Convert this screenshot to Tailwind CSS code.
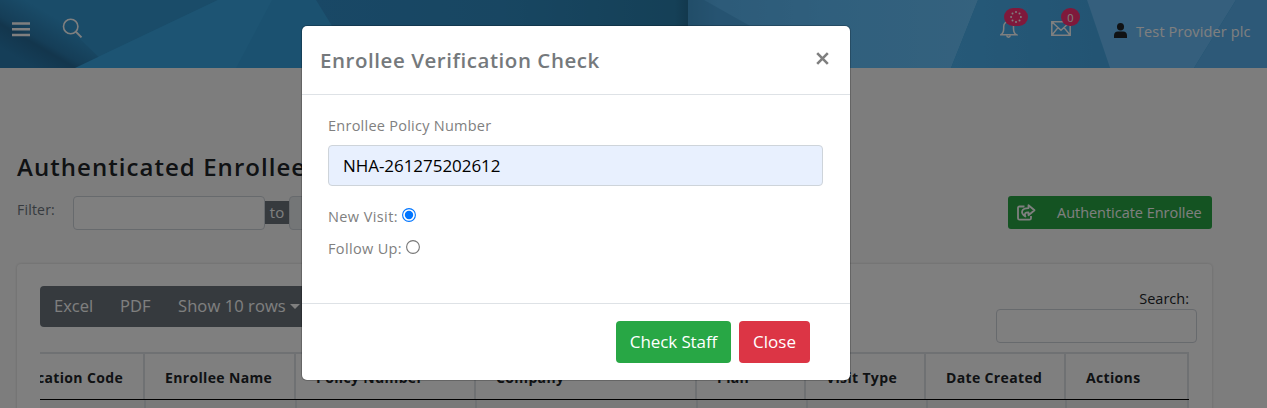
<!DOCTYPE html>
<html lang="en">
<head>
<meta charset="utf-8">
<title>Authenticated Enrollees</title>
<script src="https://cdn.jsdelivr.net/npm/@tailwindcss/browser@4"></script>
</head>
<body class="h-[408px] w-[1267px] overflow-hidden bg-[#fbfbfb] font-['Open_Sans','Noto_Sans',sans-serif] text-[#212529]">
<div class="relative h-[408px] w-[1267px] overflow-hidden">
  <header class="relative h-[68px] w-full overflow-hidden bg-[#36a4e0]">
    <svg class="absolute inset-0" width="1267" height="68" viewBox="0 0 1267 68">
      <defs>
        <linearGradient id="g2" x1="0" x2="1"><stop offset="0" stop-color="#3290cc"/><stop offset="0.5" stop-color="#308dc4"/><stop offset="0.96" stop-color="#2a80ae"/><stop offset="1" stop-color="#256f98"/></linearGradient>
        <linearGradient id="g3" x1="0" x2="1"><stop offset="0" stop-color="#4ea6dc"/><stop offset="0.1" stop-color="#5ab6f2"/><stop offset="0.5" stop-color="#60bffb"/><stop offset="1" stop-color="#6ac4fc"/></linearGradient>
        <linearGradient id="g4" x1="22" y1="60" x2="49" y2="14" gradientUnits="userSpaceOnUse"><stop offset="0" stop-color="#2a7cb0"/><stop offset="0.38" stop-color="#266c9a"/><stop offset="0.5" stop-color="#2b7caf"/><stop offset="1" stop-color="#3498d2"/></linearGradient>
        <linearGradient id="g5" x1="0" x2="1"><stop offset="0" stop-color="#4cb2f0"/><stop offset="1" stop-color="#46a8e6"/></linearGradient>
      </defs>
      <rect width="320" height="68" fill="#36a2e0"/>
      <path d="M0 0H218L75 68H0Z" fill="#3498d2"/>
      <path d="M0 0H40L110 68H0Z" fill="url(#g4)"/>
      <path d="M218 0H272L236 68H75Z" fill="#3aa9e6"/>
      <path d="M316 0H690V68H358Z" fill="url(#g2)"/>
      <path d="M688 0H978L951 68H688Z" fill="url(#g3)"/>
      <path d="M688 0H704L800 54V68H688Z" fill="#2f86bd" fill-opacity=".3"/>
      <path d="M978 0H1087L1110 68H951Z" fill="url(#g5)"/>
      <path d="M1087 0H1236L1194 68H1110Z" fill="#6abefa"/>
      <path d="M1236 0H1267V68H1194Z" fill="#5ab3f0"/>
    </svg>
    <div class="relative flex h-full items-start text-white">
      <svg class="ml-3 mt-[22px]" width="18" height="15" viewBox="0 0 18 15"><path d="M0 1.5H18M0 7.3H18M0 13H18" stroke="white" stroke-width="2.4"/></svg>
      <svg class="ml-[32px] mt-[18px]" width="21" height="21" viewBox="0 0 21 21" fill="none" stroke="white" stroke-width="1.6"><circle cx="8.7" cy="8.5" r="7.2"/><path d="M13.8 13.6L19.5 19.4" stroke-width="2"/></svg>
      <div class="relative ml-[917px] mt-[20px]">
        <svg width="18" height="19" viewBox="0 0 18 19" fill="none" stroke="white" stroke-width="1.5"><path d="M.9 14.7C3 13.4 3.7 11.5 3.7 8.5V6.5C3.7 3.6 5.7 1.8 8.5 1.8S13.5 3.6 13.5 6.5V8.5C13.5 11.5 14.2 13.4 16.3 14.7Z"/><path d="M6.7 15.4C7 17.8 10 17.8 10.3 15.4"/></svg>
        <span class="absolute -top-3 left-1 flex h-[18px] w-6 items-center justify-center rounded-full bg-[#ff3377]">
          <svg width="12" height="12" viewBox="0 0 12 12" fill="white"><circle cx="6" cy="1.1" r="1"/><circle cx="9.5" cy="2.5" r="1"/><circle cx="10.9" cy="6" r="1"/><circle cx="9.5" cy="9.5" r="1"/><circle cx="6" cy="10.9" r="1"/><circle cx="2.5" cy="9.5" r="1"/><circle cx="1.1" cy="6" r="1"/><circle cx="2.5" cy="2.5" r="1"/></svg>
        </span>
      </div>
      <div class="relative ml-[33px] mt-[21px]">
        <svg width="20" height="15" viewBox="0 0 20 15" fill="none" stroke="white" stroke-width="1.5"><path d="M.8 .8H19.2V14.2H.8ZM1 1L10 9.3L19 1M1 14L7 6.6M19 14L13 6.6"/></svg>
        <span class="absolute -top-[13px] left-[10px] flex h-[18px] w-[19px] items-center justify-center rounded-full bg-[#ff3377] text-[11px] leading-none">0</span>
      </div>
      <svg class="ml-[43px] mt-[23px]" width="13" height="15" viewBox="0 0 14 15" preserveAspectRatio="none" fill="#212529"><circle cx="7" cy="3.8" r="3.8"/><path d="M0 15V12.6C0 10 1.8 8.5 4 8.5H10C12.2 8.5 14 10 14 12.6V15Z"/></svg>
      <span class="ml-[9px] mt-[21px] whitespace-nowrap text-[14.5px] leading-[22px] tracking-[0.12px]">Test Provider plc</span>
    </div>
  </header>

  <main class="mr-4 flex h-[340px] flex-col bg-[#fbfbfb] pl-[17px] pr-[39px] pt-[80px]">
    <h1 class="h-10 shrink-0 whitespace-nowrap text-[24px] font-semibold leading-[38px] tracking-[1.05px]">Authenticated Enrollees</h1>
    <div class="flex h-[76px] shrink-0 items-start pt-2">
      <span class="mt-[2px] w-[56px] text-sm leading-[24px] tracking-[0.2px] text-[#6c757d]">Filter:</span>
      <div class="h-[34px] w-[192px] rounded border border-[#ced4da] bg-white"></div>
      <span class="mt-[5px] flex h-[23px] w-6 items-center justify-center bg-[#6c757d] text-[15px] text-white">to</span>
      <div class="h-[34px] w-[192px] rounded border border-[#ced4da] bg-[#e9ecef]"></div>
      <button class="ml-auto flex h-[33px] w-[204px] items-center rounded-[3px] bg-[#28a745] pl-[9px] text-white">
        <svg width="19" height="17" viewBox="0 0 19 17" fill="none" stroke="white" stroke-width="1.8"><path d="M7.5 2.5H2.5Q1 2.5 1 4V14.2Q1 15.7 2.5 15.7H12.5Q14 15.7 14 14.2V12"/><path d="M11.5 1.2L17.5 6.3L11.5 11.2V8.3C8.5 8.2 7 9 8.4 12.5C3 9 4.2 4.2 11.5 4.1Z" stroke-linejoin="round"/></svg>
        <span class="ml-[21px] whitespace-nowrap text-[14.5px] tracking-[-0.03px]">Authenticate Enrollee</span>
      </button>
    </div>
    <section class="h-[160px] shrink-0 rounded-t bg-white px-[23px] pt-[22px] shadow-[0_0_3px_rgba(0,0,0,0.18)]">
      <div class="flex h-[66px] justify-between">
        <div class="flex h-[41px] w-[276px] items-center rounded bg-[#6c757d] text-[16.5px] text-white">
          <span class="ml-[14px] w-[66px]">Excel</span><span class="w-[58px]">PDF</span><span class="whitespace-nowrap tracking-[0.1px]">Show 10 rows</span>
          <span class="ml-1 border-x-[5px] border-t-[5px] border-x-transparent border-t-white"></span>
        </div>
        <div class="-mr-[8px] flex w-[201px] flex-col items-end">
          <span class="mr-2 h-[23px] text-[14.5px] leading-[26px]">Search:</span>
          <div class="h-[34px] w-full rounded border border-[#ced4da] bg-white"></div>
        </div>
      </div>
      <div class="w-[1149px] overflow-hidden border-t-2 border-[#dee2e6] text-[14px] font-bold tracking-[0.35px] text-[#212529]">
        <div class="flex h-[46px] items-center border-b border-black leading-[47px] [&>div]:h-full [&>div]:shrink-0 [&>div]:whitespace-nowrap [&>div]:border-r-2 [&>div]:border-[#dee2e6]">
          <div class="flex w-[105px] justify-end overflow-hidden pr-5">Authentication Code</div>
          <div class="w-[151px] pl-5">Enrollee Name</div>
          <div class="w-[180px] pl-5">Policy Number</div>
          <div class="w-[221px] pl-5">Company</div>
          <div class="w-[109px] pl-5">Plan</div>
          <div class="w-[120px] pl-5">Visit Type</div>
          <div class="w-[140px] pl-5">Date Created</div>
          <div class="w-[123px] pl-5">Actions</div>
        </div>
        <div class="flex h-5 bg-[#f2f2f2] [&>div]:shrink-0 [&>div]:border-r-2 [&>div]:border-[#dee2e6]">
          <div class="w-[106px]"></div><div class="w-[151px]"></div><div class="w-[180px]"></div><div class="w-[221px]"></div><div class="w-[110px]"></div><div class="w-[120px]"></div><div class="w-[139px]"></div><div class="w-[122px]"></div>
        </div>
      </div>
    </section>
  </main>

  <div class="absolute inset-0 flex items-start bg-black/50 pl-[302px] pt-[26px]">
    <div class="flex h-[354px] w-[548px] flex-col rounded-[5px] bg-white text-[#808080] shadow-[0_0_0_1px_rgba(0,0,0,0.2)]">
      <div class="flex h-[69px] items-center justify-between border-b border-[#dee2e6] pl-[18px] pr-[21px]">
        <h2 class="-mt-px whitespace-nowrap text-[20.5px] font-semibold leading-8 tracking-[0.55px] text-[#75797c]">Enrollee Verification Check</h2>
        <svg class="-mt-1" width="13" height="13" viewBox="0 0 13 13"><path d="M1.2 1.2L11.8 11.8M11.8 1.2L1.2 11.8" stroke="#7f7f7f" stroke-width="2.6"/></svg>
      </div>
      <div class="flex h-[208px] flex-col px-[26px] pt-[19px] text-[14.5px] leading-6">
        <label class="h-[31px] whitespace-nowrap tracking-[0.25px]">Enrollee Policy Number</label>
        <div class="flex h-[41px] w-[495px] shrink-0 items-center rounded border border-[#ced4da] bg-[#e8f0fe] pl-[14px] text-[17px] tracking-[-0.05px] text-black">NHA-261275202612</div>
        <div class="mt-[19px] flex h-8 items-start"><span class="whitespace-nowrap tracking-[0.4px]">New Visit:</span><svg class="ml-1 mt-[3px]" width="14" height="14" viewBox="0 0 14 14"><circle cx="7" cy="7" r="6.4" fill="white" stroke="#0075ff" stroke-width="1.1"/><circle cx="7" cy="7" r="4.2" fill="#0075ff"/></svg></div>
        <div class="flex h-8 items-start"><span class="whitespace-nowrap tracking-[0.35px]">Follow Up:</span><svg class="ml-1 mt-[3px]" width="14" height="14" viewBox="0 0 14 14"><circle cx="7" cy="7" r="6.4" fill="white" stroke="#767676" stroke-width="1.1"/></svg></div>
      </div>
      <div class="flex h-[77px] items-start justify-end gap-2 border-t border-[#dee2e6] pr-10 pt-[17px] text-[17px] text-white">
        <button class="h-[42px] w-[115px] whitespace-nowrap rounded bg-[#28a745] tracking-[-0.1px]">Check Staff</button>
        <button class="h-[42px] w-[71px] rounded bg-[#dc3545]">Close</button>
      </div>
    </div>
  </div>
</div>
</body>
</html>
